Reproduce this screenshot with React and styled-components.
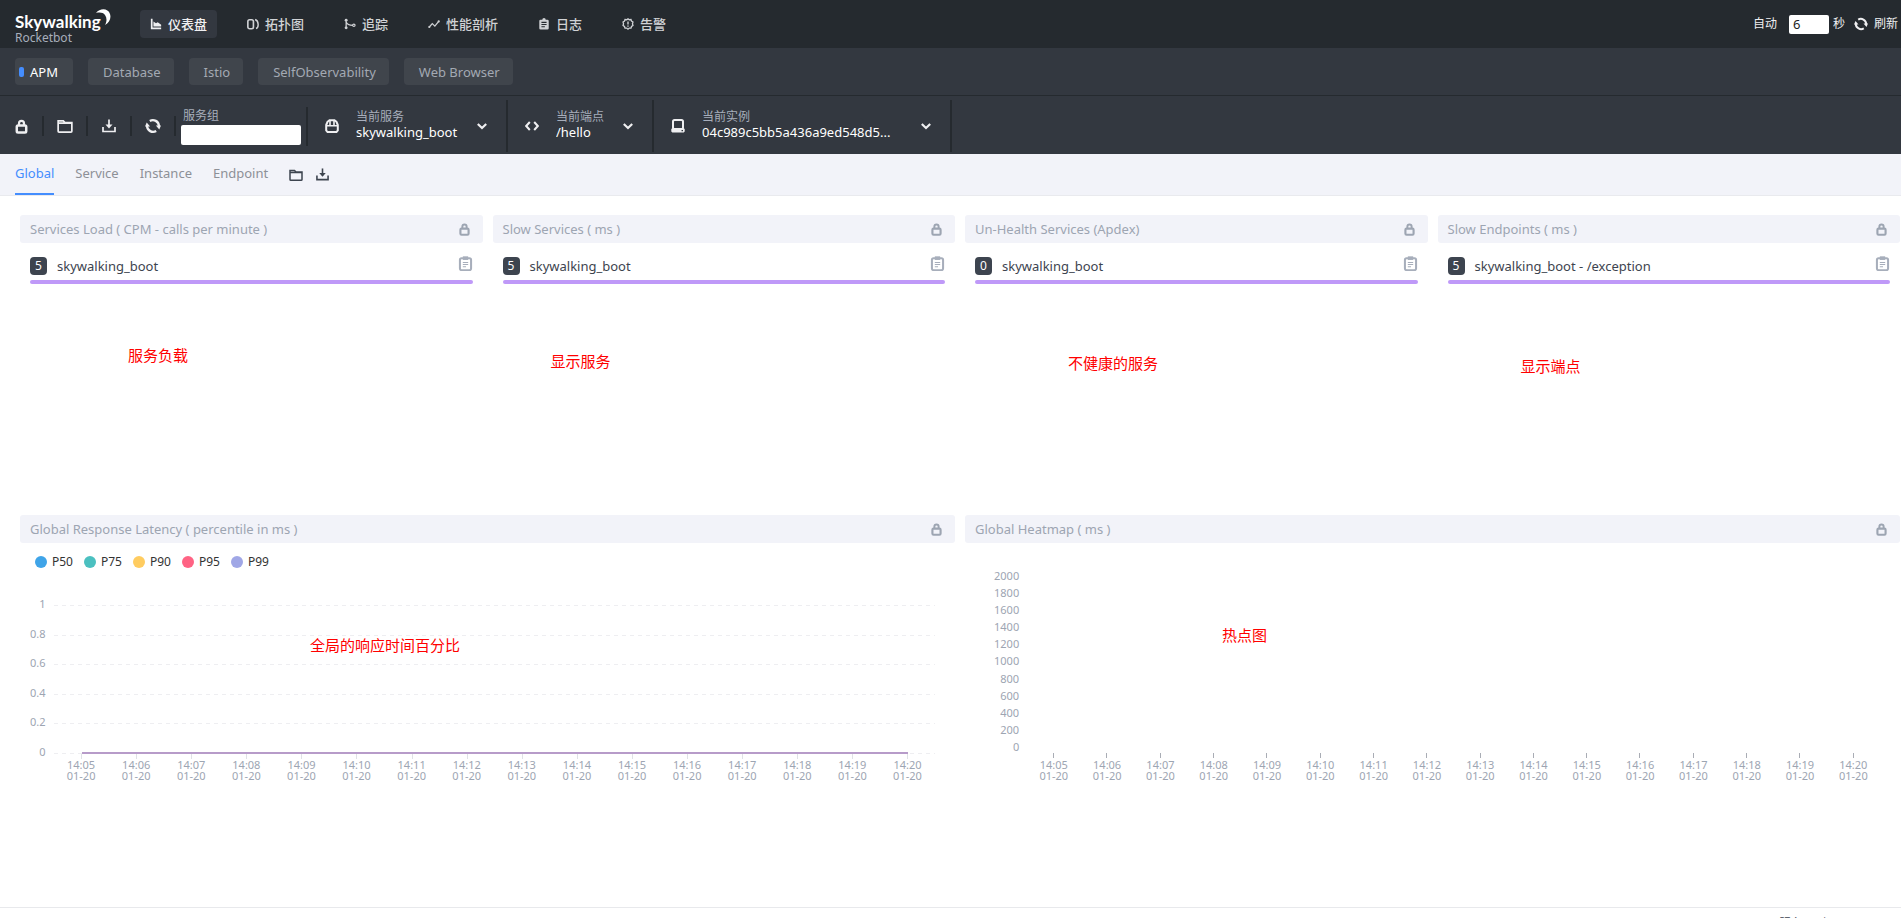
import React, { useState } from "react";
import styled, { createGlobalStyle, css } from "styled-components";

const GlobalStyle = createGlobalStyle`
    html {
        scrollbar-width: none;
    }

    body {
        margin: 0;
        background: #fff;
        color: #3d444f;
        font-family: "Noto Sans", "Noto Sans CJK SC", sans-serif;
        font-size: 13px;
        line-height: 18px;
    }

    *, *::before, *::after {
        box-sizing: border-box;
    }

    button, input, select {
        font: inherit;
        color: inherit;
        margin: 0;
        padding: 0;
        border: none;
        background: none;
    }

    button {
        cursor: pointer;
    }

    a {
        color: inherit;
        text-decoration: none;
    }
`;

/* ---------- icons ---------- */

const Svg = styled.svg`
    width: ${({ $size }) => $size || 14}px;
    height: ${({ $size }) => $size || 14}px;
    flex: none;
    display: block;
    fill: none;
    stroke: currentColor;
    stroke-width: 2;
`;

const shapes = {
    chart: (
        <path
            d="M1 1h2v10h10v2H1zM4 4l3 2 2-1 4 3v2H4z"
            fill="currentColor"
            stroke="none"
        />
    ),
    topology: (
        <>
            <rect x="1" y="2" width="6.5" height="10.5" rx="2" strokeWidth="1.9" />
            <path d="M9.5 1.8c4.500 1.500 4.500 9.500 1 10.500" strokeWidth="1.7" />
        </>
    ),
    trace: (
        <>
            <path d="M2.5 3v8M2.5 4.5c1 3 4 4 8 4" strokeWidth="1.5" />
            <circle cx="2.5" cy="2.5" r="1.7" fill="currentColor" stroke="none" />
            <circle cx="2.5" cy="11.5" r="1.7" fill="currentColor" stroke="none" />
            <circle cx="11.5" cy="8.5" r="1.4" strokeWidth="1.4" />
        </>
    ),
    profile: (
        <>
            <path d="M1.5 10.5L5 6.500l3 3L12.500 4" strokeWidth="1.5" />
            <circle cx="1.5" cy="10.5" r="1.3" fill="currentColor" stroke="none" />
            <circle cx="12.5" cy="4" r="1.3" fill="currentColor" stroke="none" />
        </>
    ),
    log: (
        <path
            d="M3 2h2a2 2 0 0 1 4 0h2a1.500 1.500 0 0 1 1.500 1.500v8.500a1.500 1.500 0 0 1-1.500 1.500H3A1.500 1.500 0 0 1 1.500 12V3.500A1.500 1.500 0 0 1 3 2zM4 4.500v1.200h6V4.500zM4 7v1.200h6V7zM4 9.500v1.200h4V9.500z"
            fill="currentColor"
            fillRule="evenodd"
            stroke="none"
        />
    ),
    alarm: (
        <>
            <path
                d="M7 1l1.500 1 2-.2.6 1.900 1.700 1-.6 2 .6 2-1.700 1.200-.6 2-2-.1L7 13l-1.500-1.200-2 .1-.6-2-1.700-1.200.6-2-.6-2 1.700-1 .6-1.900 2 .2z"
                strokeWidth="1.5"
            />
            <path d="M7 4v3.600M7 8.800v1.400" strokeWidth="1.6" />
        </>
    ),
    lock: (
        <>
            <rect x="2.6" y="6" width="8.8" height="6.600" rx="1.2" strokeWidth="2.3" />
            <path d="M4.700 6V4a2.300 2.300 0 0 1 4.600 0v2" strokeWidth="2.1" />
        </>
    ),
    folder: (
        <path
            d="M1 11.5V2.500h4.500L7 4h6v7.500a.8.8 0 0 1-.8.8H1.800a.8.8 0 0 1-.8-.8zM1 4.500h12"
            strokeWidth="1.5"
        />
    ),
    download: (
        <>
            <path d="M1 8v4.500h12V8" strokeWidth="1.7" />
            <path d="M7 .5V8" strokeWidth="1.7" />
            <path d="M3.500 5.500h7L7 9.500z" fill="currentColor" stroke="none" />
        </>
    ),
    refresh: (
        <>
            <path d="M4.200 2.600A5.300 5.300 0 0 1 12.200 7M9.800 11.400A5.300 5.300 0 0 1 1.800 7" />
            <path
                d="M9.500 6.500H14L12.500 10zM4.500 7.500H0L1.500 4z"
                fill="currentColor"
                stroke="none"
            />
        </>
    ),
    service: (
        <>
            <path
                d="M1.200 6l1.300-3.200L4.500 1.200h5l2 1.600L12.800 6v5.500L11.500 13h-9l-1.300-1.500z"
                strokeWidth="2"
            />
            <path d="M1 6.800h12M5 1v5.500M9 1v5.500" strokeWidth="1.6" />
        </>
    ),
    code: <path d="M4.800 3L1.200 7l3.600 4M9.200 3l3.600 4-3.600 4" />,
    instance: (
        <>
            <rect x="2" y="1" width="10" height="9" rx="1.500" strokeWidth="2" />
            <path
                d="M1.500 9h11l1.200 1v2.500l-1 1H1.300l-1-1V10zM10.500 11v1.200h1.500V11z"
                fill="currentColor"
                fillRule="evenodd"
                stroke="none"
            />
        </>
    ),
    chevron: <path d="M2.800 5L7 9l4.200-4" strokeWidth="2.200" />,
    clipboard: (
        <>
            <rect x="1.800" y="2" width="10.400" height="11.200" rx="1.500" strokeWidth="1.9" />
            <path d="M4.500 2h5" strokeWidth="3.400" />
            <path d="M4.500 6h5M4.500 8h5M4.500 10h3" strokeWidth="1" />
        </>
    ),
};

const Icon = ({ name, size }) => (
    <Svg viewBox="0 0 14 14" $size={size} aria-hidden="true">
        {shapes[name]}
    </Svg>
);

/* ---------- header ---------- */

const Header = styled.header`
    display: flex;
    align-items: center;
    justify-content: space-between;
    height: 48px;
    padding: 0 3px 0 15px;
    background: #252a2f;
    color: #efeff1;
`;

const HeaderSide = styled.div`
    display: flex;
    align-items: center;
`;

const Logo = styled.a`
    display: block;
    width: 125px;
    padding-top: 6px;
`;

const LogoName = styled.span`
    display: flex;
    height: 22px;
    color: #fff;
    font-family: Lato, sans-serif;
    font-size: 17px;
    font-weight: 700;
    line-height: 25px;
`;

const Moon = styled.svg`
    flex: none;
    width: 16px;
    height: 17px;
    margin-left: -6px;
    fill: #fff;
`;

const LogoSub = styled.span`
    display: block;
    color: #a7aebb;
    font-size: 12px;
    line-height: 14px;
`;

const Nav = styled.nav`
    display: flex;
    gap: 20px;
`;

const NavLink = styled.a`
    display: flex;
    align-items: center;
    gap: 6px;
    height: 28px;
    padding: 0 10px;
    border-radius: 4px;
    color: #d0d2d5;
    font-weight: 500;
    ${({ $active }) =>
        $active &&
        css`
            background: #333840;
            color: #efeff1;
        `}
`;

const AutoLabel = styled.label`
    display: flex;
    align-items: center;
    gap: 12px;
    font-size: 12px;
`;

const AutoInput = styled.input`
    width: 40px;
    height: 19px;
    padding: 0 4px;
    border-radius: 2px;
    background: #fff;
    color: #222;
    font-size: 13px;
`;

const Unit = styled.span`
    padding: 0 9px 0 4px;
    font-size: 12px;
`;

const ReloadButton = styled.button`
    display: flex;
    align-items: center;
    gap: 6px;
    font-size: 12px;
`;

/* ---------- dashboard groups ---------- */

const Groups = styled.div`
    display: flex;
    align-items: center;
    gap: 15px;
    height: 48px;
    padding: 0 15px;
    border-bottom: 1px solid #252a2f;
    background: #333840;
`;

const GroupButton = styled.button`
    height: 27px;
    padding: 0 13px 0 15px;
    border-radius: 4px;
    background: #40454c;
    color: #a3a9b3;
    ${({ $active }) =>
        $active &&
        css`
            display: flex;
            align-items: center;
            gap: 6px;
            padding: 0 15px 0 4px;
            color: #fff;

            &::before {
                content: "";
                width: 5px;
                height: 10px;
                border-radius: 2px;
                background: #448dfe;
            }
        `}
`;

/* ---------- toolbar ---------- */

const Toolbar = styled.div`
    display: flex;
    align-items: center;
    height: 58px;
    padding-top: 2px;
    background: #333840;
    color: #efeff1;
`;

const ToolButton = styled.button`
    display: flex;
    align-items: center;
    justify-content: center;
    width: 44px;
    height: 20px;
    border-right: 2px solid #252a2f;
`;

const ServiceGroup = styled.div`
    display: flex;
    flex-direction: column;
    height: 39px;
    padding: 0 5px;
    border-right: 2px solid #252a2f;
`;

const FieldLabel = styled.label`
    padding: 0 2px;
    color: #a7aebb;
    font-size: 12px;
    line-height: 18px;
`;

const GroupInput = styled.input`
    width: 120px;
    height: 20px;
    padding: 0 4px;
    border-radius: 2px;
    background: #fff;
    color: #222;
`;

const Selector = styled.div`
    display: flex;
    align-items: center;
    gap: 17px;
    height: 52px;
    padding: 0 17px;
    border-right: 2px solid #252a2f;
`;

const SelectorText = styled.div`
    display: flex;
    flex-direction: column;
    align-items: flex-start;
    padding-bottom: 3px;

    label {
        padding: 0;
        line-height: 15px;
    }
`;

const Select = styled.select`
    appearance: none;
    width: ${({ $wide }) => ($wide ? "200px" : "auto")};
    color: #fff;
    line-height: 16px;
    text-overflow: ellipsis;
`;

/* ---------- tabs ---------- */

const Tabs = styled.div`
    display: flex;
    align-items: center;
    gap: 21px;
    height: 42px;
    padding: 0 15px;
    border-bottom: 1px solid #e9eaee;
    background: #f2f3f9;
    color: #8d9097;
`;

const Tab = styled.a`
    height: 41px;
    border-bottom: 2px solid transparent;
    line-height: 39px;
    ${({ $active }) =>
        $active &&
        css`
            border-color: #448dfe;
            color: #448dfe;
        `}
`;

const TabTools = styled.div`
    display: flex;
    gap: 13px;
    color: #3d444f;

    button {
        display: block;
    }
`;

/* ---------- panels ---------- */

const Board = styled.main`
    display: grid;
    grid-template-columns: repeat(4, minmax(0, 1fr));
    gap: 10px;
    padding: 19px 1px 102px 20px;
`;

const Panel = styled.section`
    position: relative;
    grid-column: span ${({ $span }) => $span || 1};
    min-height: 290px;
`;

const PanelHead = styled.div`
    display: flex;
    align-items: center;
    justify-content: space-between;
    height: 28px;
    padding: 0 12px 0 10px;
    border-radius: 3px;
    background: #f2f3f9;
    color: #9da5b2;
`;

const PanelTitle = styled.h2`
    margin: 0;
    font-size: 13px;
    font-weight: 400;
`;

const Item = styled.div`
    padding: 13px 10px 0;
`;

const ItemRow = styled.div`
    display: flex;
    align-items: center;
    gap: 10px;
    height: 20px;

    button {
        margin-left: auto;
        color: #a7aebb;
        padding-bottom: 6px;
    }
`;

const Badge = styled.span`
    width: 17px;
    height: 18px;
    border-radius: 4px;
    background: #3d444f;
    color: #fff;
    font-size: 12px;
    text-align: center;
`;

const Bar = styled.div`
    height: 4px;
    margin-top: 4px;
    border-radius: 2px;
    background: #bf99f8;
`;

const Note = styled.span`
    position: absolute;
    left: ${({ $left }) => $left}px;
    top: ${({ $top }) => $top}px;
    color: #f00;
    font-size: 15px;
    line-height: 20px;
    white-space: nowrap;
`;

/* ---------- charts ---------- */

const Legend = styled.ul`
    display: flex;
    gap: 11px;
    height: 38px;
    margin: 0;
    padding: 10px 15px 0;
    list-style: none;
    color: #333;
    font-size: 12px;
`;

const LegendItem = styled.li`
    display: flex;
    align-items: center;
    gap: 5px;
    height: 18px;

    &::before {
        content: "";
        width: 12px;
        height: 12px;
        border-radius: 50%;
        background: ${({ $color }) => $color};
    }
`;

const Chart = styled.div`
    display: grid;
    grid-template-columns: auto minmax(0, 1fr);
    column-gap: 8px;
    padding: ${({ $heat }) => ($heat ? "27px 20px 0 29px" : "17px 20px 0 10px")};
    color: #9da5b2;
    font-size: 11px;
    line-height: 11px;
`;

const YAxis = styled.div`
    display: flex;
    flex-direction: column;
    justify-content: space-between;
    text-align: right;
    height: ${({ $heat }) => ($heat ? 182 : 159)}px;
`;

const Plot = styled.svg`
    display: block;
    width: 100%;
    height: ${({ $heat }) => ($heat ? 184 : 157)}px;
    margin-top: ${({ $heat }) => ($heat ? 0 : 4)}px;
    overflow: visible;
`;

const XAxis = styled.div`
    grid-column: 2;
    display: grid;
    grid-template-columns: repeat(16, minmax(0, 1fr));
    margin-top: ${({ $heat }) => ($heat ? 5 : 0)}px;
    text-align: center;
    white-space: pre;
`;

const Footer = styled.footer`
    display: flex;
    justify-content: flex-end;
    padding: 7px 62px 7px 15px;
    border-top: 1px solid #e8e9ec;
    font-size: 12px;
`;

const navItems = [
    { icon: "chart", text: "仪表盘" },
    { icon: "topology", text: "拓扑图" },
    { icon: "trace", text: "追踪" },
    { icon: "profile", text: "性能剖析" },
    { icon: "log", text: "日志" },
    { icon: "alarm", text: "告警" },
];

const groups = ["APM", "Database", "Istio", "SelfObservability", "Web Browser"];

const tools = [
    { icon: "lock", size: 15, title: "Lock" },
    { icon: "folder", size: 16, title: "Import" },
    { icon: "download", size: 14, title: "Export" },
    { icon: "refresh", size: 16, title: "Refresh" },
];

const selectors = [
    { id: "service", icon: "service", label: "当前服务", value: "skywalking_boot" },
    { id: "endpoint", icon: "code", label: "当前端点", value: "/hello" },
    {
        id: "instance",
        icon: "instance",
        label: "当前实例",
        value: "04c989c5bb5a436a9ed548d5...",
        wide: true,
    },
];

const tabs = ["Global", "Service", "Instance", "Endpoint"];

const rankings = [
    {
        title: "Services Load ( CPM - calls per minute )",
        value: 5,
        name: "skywalking_boot",
        note: { text: "服务负载", left: 108, top: 130 },
    },
    {
        title: "Slow Services ( ms )",
        value: 5,
        name: "skywalking_boot",
        note: { text: "显示服务", left: 58, top: 136 },
    },
    {
        title: "Un-Health Services (Apdex)",
        value: 0,
        name: "skywalking_boot",
        note: { text: "不健康的服务", left: 103, top: 138 },
    },
    {
        title: "Slow Endpoints ( ms )",
        value: 5,
        name: "skywalking_boot - /exception",
        note: { text: "显示端点", left: 83, top: 141 },
    },
];

const percentiles = [
    { name: "P50", color: "#3fa4e8" },
    { name: "P75", color: "#4bc0c0" },
    { name: "P90", color: "#ffcc60" },
    { name: "P95", color: "#ff6384" },
    { name: "P99", color: "#a0a7e6" },
];

const minutes = Array.from({ length: 16 }, (_, i) => `14:${String(i + 5).padStart(2, "0")}`);
const latencySteps = ["1", "0.8", "0.6", "0.4", "0.2", "0"];
const heatSteps = [2000, 1800, 1600, 1400, 1200, 1000, 800, 600, 400, 200, 0];

const center = (i) => `${((i + 0.5) / minutes.length) * 100}%`;

const TimeAxis = ({ heat }) => (
    <XAxis $heat={heat}>
        {minutes.map((m) => (
            <span key={m}>{`${m}\n01-20`}</span>
        ))}
    </XAxis>
);

const Ticks = ({ y, color }) =>
    minutes.map((m, i) => (
        <line key={m} x1={center(i)} x2={center(i)} y1={y} y2={y + 5} stroke={color} />
    ));

const LatencyChart = () => (
    <>
        <Legend>
            {percentiles.map((p) => (
                <LegendItem key={p.name} $color={p.color}>
                    {p.name}
                </LegendItem>
            ))}
        </Legend>
        <Chart>
            <YAxis>
                {latencySteps.map((s) => (
                    <span key={s}>{s}</span>
                ))}
            </YAxis>
            <Plot shapeRendering="crispEdges">
                {latencySteps.map((s, i) => (
                    <line
                        key={s}
                        x1="0"
                        x2="100%"
                        y1={i * 29.5 + 3.5}
                        y2={i * 29.5 + 3.5}
                        stroke="#eeeef1"
                        strokeDasharray="4 4"
                    />
                ))}
                <Ticks y={152} color="#e0e2e6" />
                <line x1={center(0)} x2={center(15)} y1="151" y2="151" stroke="#b79bc9" strokeWidth="2" />
            </Plot>
            <TimeAxis />
        </Chart>
    </>
);

const HeatmapChart = () => (
    <Chart $heat>
        <YAxis $heat>
            {heatSteps.map((s) => (
                <span key={s}>{s}</span>
            ))}
        </YAxis>
        <Plot $heat shapeRendering="crispEdges">
            <Ticks y={183} color="#a9adb5" />
        </Plot>
        <TimeAxis heat />
    </Chart>
);

const PanelHeader = ({ title }) => (
    <PanelHead>
        <PanelTitle>{title}</PanelTitle>
        <Icon name="lock" size={13} />
    </PanelHead>
);

const App = () => {
    const [group, setGroup] = useState("APM");
    const [seconds, setSeconds] = useState("6");

    return (
        <>
            <GlobalStyle />
            <Header>
                <HeaderSide>
                    <Logo href="#">
                        <LogoName>
                            Skywalking
                            <Moon viewBox="0 0 16 17">
                                <path d="M1 4C5-1 13-1 15 5c1.500 5-1 9-5 11 2-4 2-7 0-10C8 3.500 5 3 1 4z" />
                            </Moon>
                        </LogoName>
                        <LogoSub>Rocketbot</LogoSub>
                    </Logo>
                    <Nav>
                        {navItems.map((item, i) => (
                            <NavLink key={item.text} href="#" $active={i === 0}>
                                <Icon name={item.icon} size={12} />
                                {item.text}
                            </NavLink>
                        ))}
                    </Nav>
                </HeaderSide>
                <HeaderSide>
                    <AutoLabel>
                        自动
                        <AutoInput value={seconds} onChange={(e) => setSeconds(e.target.value)} />
                    </AutoLabel>
                    <Unit>秒</Unit>
                    <ReloadButton>
                        <Icon name="refresh" size={14} />
                        刷新
                    </ReloadButton>
                </HeaderSide>
            </Header>

            <Groups>
                {groups.map((g) => (
                    <GroupButton key={g} $active={g === group} onClick={() => setGroup(g)}>
                        {g}
                    </GroupButton>
                ))}
            </Groups>

            <Toolbar>
                {tools.map((t) => (
                    <ToolButton key={t.icon} aria-label={t.title}>
                        <Icon name={t.icon} size={t.size} />
                    </ToolButton>
                ))}
                <ServiceGroup>
                    <FieldLabel htmlFor="group">服务组</FieldLabel>
                    <GroupInput id="group" type="text" />
                </ServiceGroup>
                {selectors.map((s) => (
                    <Selector key={s.id}>
                        <Icon name={s.icon} />
                        <SelectorText>
                            <FieldLabel htmlFor={s.id}>{s.label}</FieldLabel>
                            <Select id={s.id} $wide={s.wide}>
                                <option>{s.value}</option>
                            </Select>
                        </SelectorText>
                        <Icon name="chevron" />
                    </Selector>
                ))}
            </Toolbar>

            <Tabs>
                {tabs.map((t, i) => (
                    <Tab key={t} href="#" $active={i === 0}>
                        {t}
                    </Tab>
                ))}
                <TabTools>
                    <button aria-label="Import">
                        <Icon name="folder" />
                    </button>
                    <button aria-label="Export">
                        <Icon name="download" size={13} />
                    </button>
                </TabTools>
            </Tabs>

            <Board>
                {rankings.map((r) => (
                    <Panel key={r.title}>
                        <PanelHeader title={r.title} />
                        <Item>
                            <ItemRow>
                                <Badge>{r.value}</Badge>
                                {r.name}
                                <button aria-label="Copy">
                                    <Icon name="clipboard" size={15} />
                                </button>
                            </ItemRow>
                            <Bar />
                        </Item>
                        <Note $left={r.note.left} $top={r.note.top}>
                            {r.note.text}
                        </Note>
                    </Panel>
                ))}
                <Panel $span={2}>
                    <PanelHeader title="Global Response Latency ( percentile in ms )" />
                    <LatencyChart />
                    <Note $left={290} $top={120}>
                        全局的响应时间百分比
                    </Note>
                </Panel>
                <Panel $span={2}>
                    <PanelHeader title="Global Heatmap ( ms )" />
                    <HeatmapChart />
                    <Note $left={257} $top={110}>
                        热点图
                    </Note>
                </Panel>
            </Board>

            <Footer>服务器时区</Footer>
        </>
    );
};

export default App;
